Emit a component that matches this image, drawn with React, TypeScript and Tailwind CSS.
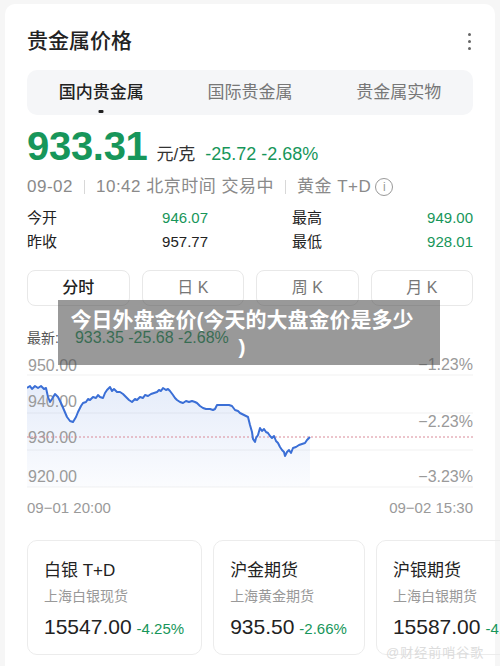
const green = "text-[#17965a]";

const pts: [number, number][] = [
  [0, 33], [3, 31], [5, 34], [8, 31], [11, 33], [14, 31], [17, 34], [19, 33], [21, 42], [23, 47],
  [25, 44], [28, 39], [31, 42], [34, 48], [37, 55], [40, 62], [43, 66], [46, 67], [49, 62], [51, 57],
  [54, 51], [56, 48], [59, 47], [61, 44], [63, 45], [66, 42], [69, 43], [71, 40], [73, 42], [76, 43],
  [78, 38], [80, 35], [83, 32], [85, 36], [87, 34], [90, 37], [93, 37], [96, 39], [99, 42], [102, 45],
  [105, 47], [108, 44], [110, 45], [113, 42], [116, 43], [118, 40], [121, 41], [124, 39], [127, 38], [130, 37],
  [132, 35], [134, 36], [136, 33], [139, 35], [141, 34], [143, 36], [146, 40], [148, 43], [150, 45], [153, 47],
  [156, 48], [159, 46], [162, 47], [165, 46], [168, 47], [170, 48], [173, 51], [176, 53], [179, 54], [183, 54],
  [186, 55], [188, 54], [190, 50], [196, 50], [202, 50], [205, 51], [208, 55], [211, 56], [213, 58], [217, 60],
  [221, 62], [223, 70], [225, 77], [226, 84], [228, 87], [229, 83], [231, 80], [233, 73], [235, 76], [237, 74],
  [239, 77], [241, 78], [243, 81], [245, 83], [247, 81], [249, 86], [251, 88], [253, 92], [255, 95], [257, 97],
  [258, 101], [260, 97], [262, 95], [264, 98], [266, 93], [269, 92], [272, 90], [275, 89], [278, 88], [280, 85],
  [283, 82],
];

const linePts = pts.map(([x, y]) => `${x},${y}`).join(" ");
const areaPath = `M0,132 L${pts.map(([x, y]) => `${x},${y}`).join(" L")} L283,132 Z`;

function Chart() {
  return (
    <svg width="446" height="138" viewBox="0 0 446 138" className="block">
      <defs>
        <linearGradient id="fill" x1="0" y1="0" x2="0" y2="1">
          <stop offset="0%" stopColor="#3b6fd6" stopOpacity="0.13" />
          <stop offset="100%" stopColor="#3b6fd6" stopOpacity="0.02" />
        </linearGradient>
      </defs>
      {[20, 58, 95, 132].map((y) => (
        <line key={y} x1="0" x2="446" y1={y} y2={y} stroke="#f1f1f1" strokeWidth="1" />
      ))}
      <path d={areaPath} fill="url(#fill)" />
      <g fill="#9a9a9a" fontSize="16" fontFamily="Liberation Sans, sans-serif">
        <text x="1" y="16">950.00</text>
        <text x="1" y="52">940.00</text>
        <text x="1" y="88">930.00</text>
        <text x="1" y="127">920.00</text>
        <text x="446" y="15" textAnchor="end">−1.23%</text>
        <text x="446" y="72" textAnchor="end">−2.23%</text>
        <text x="446" y="127" textAnchor="end">−3.23%</text>
      </g>
      <line x1="0" x2="446" y1="82" y2="82" stroke="#d98a98" strokeWidth="1" strokeDasharray="2 2" />
      <polyline points={linePts} fill="none" stroke="#3b6fd6" strokeWidth="2" strokeLinejoin="round" />
    </svg>
  );
}

const cards = [
  { t: "白银 T+D", s: "上海白银现货", p: "15547.00", c: "-4.25%" },
  { t: "沪金期货", s: "上海黄金期货", p: "935.50", c: "-2.66%" },
  { t: "沪银期货", s: "上海白银期货", p: "15587.00", c: "-4.25%" },
];

export default function App() {
  return (
    <div className="relative w-[500px] h-[666px] overflow-hidden bg-[#f6f6f6] pt-[4px] px-[5px] font-['Liberation_Sans','Noto_Sans_CJK_SC',sans-serif] text-[#222]">
      <div className="bg-white rounded-[10px] h-[700px] px-[22px] pt-[23px]">
        {/* title */}
        <div className="flex items-center justify-between h-[28px]">
          <div className="text-[21px] leading-[28px] font-medium text-[#222]">贵金属价格</div>
          <div className="flex flex-col gap-[4px] mr-[2px]">
            <span className="w-[3px] h-[3px] rounded-full bg-[#666]" />
            <span className="w-[3px] h-[3px] rounded-full bg-[#666]" />
            <span className="w-[3px] h-[3px] rounded-full bg-[#666]" />
          </div>
        </div>

        {/* market tabs */}
        <div className="mt-[15px] h-[45px] rounded-[10px] bg-[#f5f6f8] grid grid-cols-3 text-[17px]">
          <div className="relative flex items-center justify-center font-medium text-[#222]">
            国内贵金属
            <span className="absolute bottom-[2px] left-1/2 -translate-x-1/2 w-[5px] h-[3px] rounded-[1px] bg-[#222]" />
          </div>
          <div className="flex items-center justify-center text-[#777]">国际贵金属</div>
          <div className="flex items-center justify-center text-[#777]">贵金属实物</div>
        </div>

        {/* price */}
        <div className="mt-[8px] flex items-baseline h-[46px]">
          <span className={`text-[40px] leading-[46px] font-bold tracking-[-0.3px] ${green}`}>933.31</span>
          <span className="ml-[9px] text-[17px] text-[#333]">元/克</span>
          <span className={`ml-[10px] text-[18px] ${green}`}>-25.72 -2.68%</span>
        </div>

        <div className="mt-[7px] flex items-center text-[17px] leading-[22px] tracking-[0.5px] text-[#8a8a8a]">
          <span>09-02</span>
          <span className="mx-[11px] w-px h-[14px] bg-[#d8d8d8]" />
          <span>10:42 北京时间 交易中</span>
          <span className="mx-[11px] w-px h-[14px] bg-[#d8d8d8]" />
          <span>黄金 T+D</span>
          <span className="ml-[4px] w-[18px] h-[18px] rounded-full border border-[#999] flex items-center justify-center text-[12px] leading-none tracking-normal text-[#999]">i</span>
        </div>

        {/* stats */}
        <div className="mt-[8px] grid grid-cols-2 gap-x-[84px] text-[15px] leading-[24px]">
          <div className="flex justify-between">
            <span className="text-[#222]">今开</span>
            <span className={green}>946.07</span>
          </div>
          <div className="flex justify-between">
            <span className="text-[#222]">最高</span>
            <span className={green}>949.00</span>
          </div>
          <div className="flex justify-between">
            <span className="text-[#222]">昨收</span>
            <span className="text-[#222]">957.77</span>
          </div>
          <div className="flex justify-between">
            <span className="text-[#222]">最低</span>
            <span className={green}>928.01</span>
          </div>
        </div>

        {/* period tabs */}
        <div className="mt-[16px] grid grid-cols-4 gap-[12px] text-[16px]">
          <div className="h-[36px] rounded-[8px] border border-[#e8e8e8] flex items-center justify-center font-medium text-[#222]">分时</div>
          <div className="h-[36px] rounded-[8px] border border-[#e8e8e8] flex items-center justify-center text-[#777]">日 K</div>
          <div className="h-[36px] rounded-[8px] border border-[#e8e8e8] flex items-center justify-center text-[#777]">周 K</div>
          <div className="h-[36px] rounded-[8px] border border-[#e8e8e8] flex items-center justify-center text-[#777]">月 K</div>
        </div>

        <div className="mt-[22px] flex items-center text-[14px] leading-[20px]">
          <span className="text-[#555]">最新:</span>
          <span className={`ml-[16px] text-[16px] ${green}`}>933.35 -25.68 -2.68%</span>
        </div>

        <div className="mt-[7px]">
          <Chart />
        </div>

        <div className="mt-[5px] flex justify-between text-[15px] leading-[20px] text-[#9a9a9a]">
          <span>09−01 20:00</span>
          <span>09−02 15:30</span>
        </div>

        {/* related cards */}
        <div className="mt-[22px] -mr-[28px] flex gap-[11px] overflow-hidden">
          {cards.map((c) => (
            <div key={c.t} className="shrink-0 h-[115px] rounded-[10px] border border-[#ececec] pl-[16px] pr-[17px] pt-[18px]">
              <div className="text-[17px] leading-[24px] text-[#222]">{c.t}</div>
              <div className="text-[14px] leading-[22px] mt-[2px] text-[#999]">{c.s}</div>
              <div className="mt-[6px] flex items-baseline gap-[5px] whitespace-nowrap">
                <span className="text-[21px] leading-[28px] text-[#222]">{c.p}</span>
                <span className={`text-[15px] ${green}`}>{c.c}</span>
              </div>
            </div>
          ))}
        </div>
      </div>

      {/* watermark */}
      <div className="absolute left-[386px] top-[643px] text-[13px] text-[#dcdcdc] tracking-[1px] whitespace-nowrap">@财经前哨谷歌</div>

      {/* title overlay */}
      <div className="absolute left-[58px] top-[300px] w-[382px] h-[65px] bg-[rgba(80,80,80,0.58)] flex flex-col items-center justify-center pr-[14px] text-white font-bold text-[21px] leading-[27px] text-center">
        <span>今日外盘金价(今天的大盘金价是多少</span>
        <span>)</span>
      </div>
    </div>
  );
}
